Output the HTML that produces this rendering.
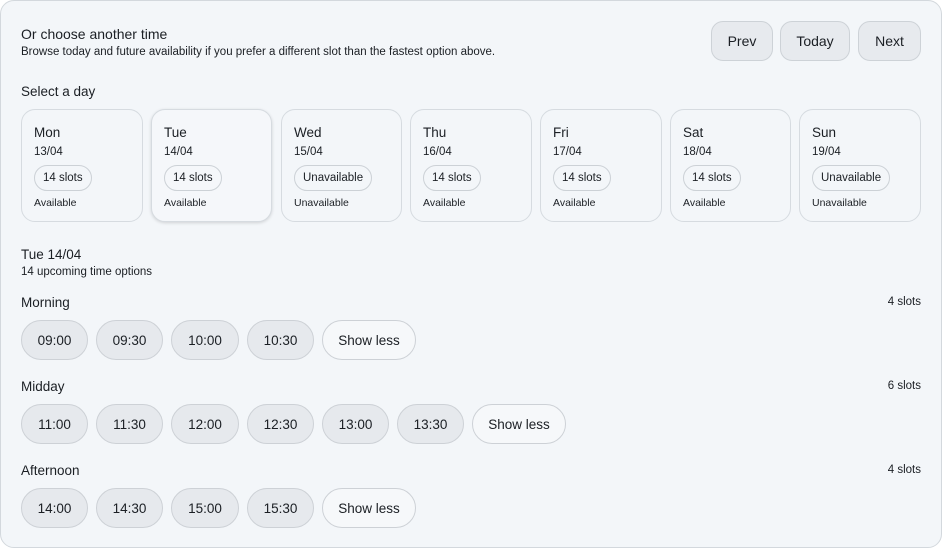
<!DOCTYPE html>
<html><head><style>
*{box-sizing:border-box;margin:0;padding:0}
body{width:942px;height:548px;background:#fff;font-family:"Liberation Sans","DejaVu Sans",sans-serif;color:#1b1f24;position:relative;overflow:hidden}
.wrap{position:absolute;left:0;top:0;width:942px;height:548px;background:#f3f6f9;border:1px solid #d3d8dd;border-radius:14px}
.abs{position:absolute;white-space:nowrap}
.btn{position:absolute;top:21px;height:40px;background:#e7eaee;border:1px solid #cdd2d7;border-radius:12px;font-size:14px;display:flex;align-items:center;justify-content:center}
.card{position:absolute;top:109px;width:122px;height:113px;border:1px solid #d6dbe0;border-radius:14px;background:#f3f6f9}
.card.sel{background:#f5f7fa;box-shadow:0 1px 3px rgba(0,0,0,.15)}
.card .n{position:absolute;left:12px;top:15px;font-size:13.5px}
.card .d{position:absolute;left:12px;top:36px;font-size:11.5px}
.card .p{position:absolute;left:12px;top:55px;height:26px;padding:0 8px;border:1px solid #ccd1d6;border-radius:13px;font-size:11.5px;line-height:25px}
.card .s{position:absolute;left:12px;top:87px;font-size:10.5px}
.pill{position:absolute;height:40px;border:1px solid #cdd1d6;background:#e6e9ed;border-radius:20px;font-size:13.5px;display:flex;align-items:center;justify-content:center;padding-top:1px}
.pill.w{background:#f6f8fa}
.lbl{font-size:13.5px}
.cnt{font-size:11.5px;right:21px}
</style></head><body><div class="wrap"></div>
<div class="abs" style="left:21px;top:26px;font-size:14px">Or choose another time</div>
<div class="abs" style="left:21px;top:46px;font-size:11.5px">Browse today and future availability if you prefer a different slot than the fastest option above.</div>
<div class="btn" style="left:711px;width:62px">Prev</div>
<div class="btn" style="left:780px;width:70px">Today</div>
<div class="btn" style="left:858px;width:63px">Next</div>
<div class="abs lbl" style="left:21px;top:84px">Select a day</div>

<div class="card" style="left:21px"><div class="n">Mon</div><div class="d">13/04</div><div class="p">14 slots</div><div class="s">Available</div></div>
<div class="card sel" style="left:151px;width:121px"><div class="n">Tue</div><div class="d">14/04</div><div class="p">14 slots</div><div class="s">Available</div></div>
<div class="card" style="left:281px;width:121px"><div class="n">Wed</div><div class="d">15/04</div><div class="p">Unavailable</div><div class="s">Unavailable</div></div>
<div class="card" style="left:410px"><div class="n">Thu</div><div class="d">16/04</div><div class="p">14 slots</div><div class="s">Available</div></div>
<div class="card" style="left:540px"><div class="n">Fri</div><div class="d">17/04</div><div class="p">14 slots</div><div class="s">Available</div></div>
<div class="card" style="left:670px;width:121px"><div class="n">Sat</div><div class="d">18/04</div><div class="p">14 slots</div><div class="s">Available</div></div>
<div class="card" style="left:799px"><div class="n">Sun</div><div class="d">19/04</div><div class="p">Unavailable</div><div class="s">Unavailable</div></div>

<div class="abs lbl" style="left:21px;top:247px">Tue 14/04</div>
<div class="abs" style="left:21px;top:266px;font-size:11.5px">14 upcoming time options</div>

<div class="abs lbl" style="left:21px;top:295px">Morning</div><div class="abs cnt" style="top:296px">4 slots</div>
<div class="pill" style="left:21px;top:320px;width:67px">09:00</div>
<div class="pill" style="left:96px;top:320px;width:67px">09:30</div>
<div class="pill" style="left:171px;top:320px;width:68px">10:00</div>
<div class="pill" style="left:247px;top:320px;width:67px">10:30</div>
<div class="pill w" style="left:322px;top:320px;width:94px">Show less</div>

<div class="abs lbl" style="left:21px;top:379px">Midday</div><div class="abs cnt" style="top:380px">6 slots</div>
<div class="pill" style="left:21px;top:404px;width:67px">11:00</div>
<div class="pill" style="left:96px;top:404px;width:67px">11:30</div>
<div class="pill" style="left:171px;top:404px;width:68px">12:00</div>
<div class="pill" style="left:247px;top:404px;width:67px">12:30</div>
<div class="pill" style="left:322px;top:404px;width:67px">13:00</div>
<div class="pill" style="left:397px;top:404px;width:67px">13:30</div>
<div class="pill w" style="left:472px;top:404px;width:94px">Show less</div>

<div class="abs lbl" style="left:21px;top:463px">Afternoon</div><div class="abs cnt" style="top:464px">4 slots</div>
<div class="pill" style="left:21px;top:488px;width:67px">14:00</div>
<div class="pill" style="left:96px;top:488px;width:67px">14:30</div>
<div class="pill" style="left:171px;top:488px;width:68px">15:00</div>
<div class="pill" style="left:247px;top:488px;width:67px">15:30</div>
<div class="pill w" style="left:322px;top:488px;width:94px">Show less</div>
</body></html>
